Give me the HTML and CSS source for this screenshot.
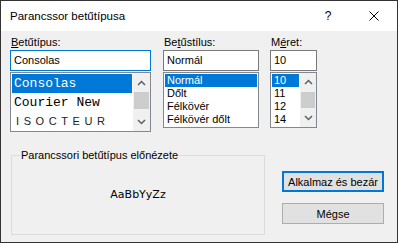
FILE: index.html
```html
<!DOCTYPE html>
<html lang="hu">
<head>
    <meta charset="UTF-8">
    <meta name="viewport" content="width=device-width, initial-scale=1.0">
    <title>Parancssor betűtípusa</title>
    <link rel="stylesheet" href="styles.css">
</head>
<body>
    <div class="dialog">
        <div class="titlebar">
            <span class="title">Parancssor betűtípusa</span>
            <div class="caption-btn help">?</div>
            <div class="caption-btn close">
                <svg width="10" height="10" viewBox="0 0 10 10">
                    <path d="M0.5 0.5 L9.5 9.5 M9.5 0.5 L0.5 9.5" stroke="#000" stroke-width="1" fill="none"/>
                </svg>
            </div>
        </div>

        <div class="content">
            <div class="pickers">
                <div class="picker font-col">
                    <label><u>B</u>etűtípus:</label>
                    <div class="field focused">Consolas</div>
                    <div class="list font-list">
                        <div class="items">
                            <div class="item mono selected">Consolas</div>
                            <div class="item mono">Courier New</div>
                            <div class="item isoc">ISOCTEUR</div>
                        </div>
                        <div class="scrollbar tall">
                            <div class="arrow">
                                <svg width="9" height="6" viewBox="0 0 9 6"><path d="M1 5 L4.5 1.5 L8 5" stroke="#606060" stroke-width="1.5" fill="none"/></svg>
                            </div>
                            <div class="thumb"></div>
                            <div class="track"></div>
                            <div class="arrow">
                                <svg width="9" height="6" viewBox="0 0 9 6"><path d="M1 1 L4.5 4.5 L8 1" stroke="#606060" stroke-width="1.5" fill="none"/></svg>
                            </div>
                        </div>
                    </div>
                </div>

                <div class="picker style-col">
                    <label>Be<u>t</u>űstílus:</label>
                    <div class="field">Normál</div>
                    <div class="list small-list">
                        <div class="items">
                            <div class="item selected">Normál</div>
                            <div class="item">Dőlt</div>
                            <div class="item">Félkövér</div>
                            <div class="item">Félkövér dőlt</div>
                        </div>
                    </div>
                </div>

                <div class="picker size-col">
                    <label>M<u>é</u>ret:</label>
                    <div class="field">10</div>
                    <div class="list small-list">
                        <div class="items">
                            <div class="item selected">10</div>
                            <div class="item">11</div>
                            <div class="item">12</div>
                            <div class="item">14</div>
                        </div>
                        <div class="scrollbar">
                            <div class="arrow">
                                <svg width="9" height="6" viewBox="0 0 9 6"><path d="M1 5 L4.5 1.5 L8 5" stroke="#606060" stroke-width="1.5" fill="none"/></svg>
                            </div>
                            <div class="thumb"></div>
                            <div class="track"></div>
                            <div class="arrow">
                                <svg width="9" height="6" viewBox="0 0 9 6"><path d="M1 1 L4.5 4.5 L8 1" stroke="#606060" stroke-width="1.5" fill="none"/></svg>
                            </div>
                        </div>
                    </div>
                </div>
            </div>

            <div class="bottom">
                <fieldset class="preview-box">
                    <legend>Parancssori betűtípus előnézete</legend>
                    <div class="preview">AaBbYyZz</div>
                </fieldset>
                <div class="buttons">
                    <button class="btn default">Alkalmaz és bezár</button>
                    <button class="btn">Mégse</button>
                </div>
            </div>
        </div>
    </div>
</body>
</html>
```

FILE: styles.css
```css
* {
    box-sizing: border-box;
}

body {
    margin: 0;
    padding: 0;
    background-color: #fff;
    font-family: "Liberation Sans", Arial, sans-serif;
    font-size: 11px;
    color: #000;
}

.dialog {
    width: 398px;
    height: 243px;
    border: 1px solid #333;
    display: flex;
    flex-direction: column;
    background-color: #f0f0f0;
}

.titlebar {
    height: 30px;
    background-color: #fff;
    display: flex;
    align-items: center;
    padding-left: 9px;
}

.title {
    flex: 1;
    font-size: 11.5px;
}

.caption-btn {
    width: 46px;
    height: 30px;
    display: flex;
    align-items: center;
    justify-content: center;
}

.help {
    font-size: 12px;
}

.content {
    flex: 1;
    padding: 5px 0 0 9px;
}

.pickers {
    display: flex;
    align-items: flex-start;
}

.picker {
    display: flex;
    flex-direction: column;
}

.font-col {
    width: 141px;
    margin-right: 12px;
}

.style-col {
    width: 96px;
    margin-right: 11px;
}

.size-col {
    width: 47px;
}

label {
    height: 14px;
    line-height: 13px;
    padding-left: 1px;
}

label u {
    text-underline-offset: 1px;
}

.field {
    height: 21px;
    border: 1px solid #7a7a7a;
    background-color: #fff;
    line-height: 19px;
    padding-left: 3px;
    font-size: 11px;
}

.field.focused {
    border-color: #0078d7;
}

.list {
    margin-top: 1px;
    border: 1px solid #828790;
    background-color: #fff;
    display: flex;
}

.font-list {
    height: 60px;
}

.small-list {
    height: 56px;
}

.items {
    flex: 1;
    padding: 1px;
}

.item {
    height: 13px;
    line-height: 13px;
    padding-left: 2px;
    white-space: nowrap;
    font-size: 11px;
}

.item.mono {
    height: 19px;
    line-height: 19px;
    font-family: "Liberation Mono", "Courier New", monospace;
    font-size: 13px;
}

.item.isoc {
    height: 19px;
    line-height: 19px;
    padding-left: 4px;
    font-size: 11px;
    letter-spacing: 4.6px;
    color: #222;
}

.item.selected {
    background-color: #0078d7;
    color: #fff;
}

.scrollbar {
    width: 16px;
    background-color: #f0f0f0;
    display: flex;
    flex-direction: column;
}

.scrollbar.tall {
    width: 17px;
}

.arrow {
    height: 19px;
    display: flex;
    align-items: center;
    justify-content: center;
}

.thumb {
    height: 17px;
    background-color: #cdcdcd;
    margin: 0 1px;
}

.track {
    flex: 1;
}

.bottom {
    display: flex;
    margin-top: 17px;
}

.preview-box {
    width: 254px;
    margin: 0 17px 0 1px;
    padding: 0 0 24px 8px;
    border: 1px solid #dcdcdc;
    min-width: 0;
}

legend {
    padding: 0 1px;
    line-height: 13px;
}

.preview {
    margin-left: -8px;
    padding-top: 26px;
    height: 40px;
    line-height: 14px;
    text-align: center;
    font-family: "DejaVu Sans", sans-serif;
    font-size: 11px;
}

.buttons {
    width: 102px;
    display: flex;
    flex-direction: column;
    padding-top: 22px;
}

.btn {
    height: 21px;
    background-color: #e1e1e1;
    border: 1px solid #adadad;
    font-family: "Liberation Sans", Arial, sans-serif;
    font-size: 11px;
    color: #000;
    padding: 0;
    margin-bottom: 11px;
}

.btn.default {
    border: 2px solid #0078d7;
}
```
